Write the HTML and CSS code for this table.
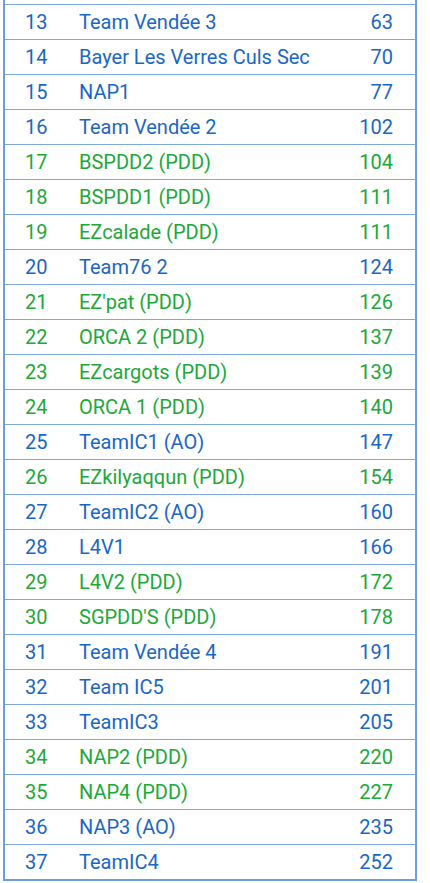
FILE: index.html
```html
<!DOCTYPE html>
<html lang="fr">
<head>
<meta charset="utf-8">
<link rel="stylesheet" href="styles.css">
</head>
<body>
<div class="frame">
  <div class="table">
    <div class="row"><span class="rank">13</span><span class="name">Team Vendée 3</span><span class="score">63</span></div>
    <div class="row"><span class="rank">14</span><span class="name">Bayer Les Verres Culs Sec</span><span class="score">70</span></div>
    <div class="row"><span class="rank">15</span><span class="name">NAP1</span><span class="score">77</span></div>
    <div class="row"><span class="rank">16</span><span class="name">Team Vendée 2</span><span class="score">102</span></div>
    <div class="row pdd"><span class="rank">17</span><span class="name">BSPDD2 (PDD)</span><span class="score">104</span></div>
    <div class="row pdd"><span class="rank">18</span><span class="name">BSPDD1 (PDD)</span><span class="score">111</span></div>
    <div class="row pdd"><span class="rank">19</span><span class="name">EZcalade (PDD)</span><span class="score">111</span></div>
    <div class="row"><span class="rank">20</span><span class="name">Team76 2</span><span class="score">124</span></div>
    <div class="row pdd"><span class="rank">21</span><span class="name">EZ'pat (PDD)</span><span class="score">126</span></div>
    <div class="row pdd"><span class="rank">22</span><span class="name">ORCA 2 (PDD)</span><span class="score">137</span></div>
    <div class="row pdd"><span class="rank">23</span><span class="name">EZcargots (PDD)</span><span class="score">139</span></div>
    <div class="row pdd"><span class="rank">24</span><span class="name">ORCA 1 (PDD)</span><span class="score">140</span></div>
    <div class="row"><span class="rank">25</span><span class="name">TeamIC1 (AO)</span><span class="score">147</span></div>
    <div class="row pdd"><span class="rank">26</span><span class="name">EZkilyaqqun (PDD)</span><span class="score">154</span></div>
    <div class="row"><span class="rank">27</span><span class="name">TeamIC2 (AO)</span><span class="score">160</span></div>
    <div class="row"><span class="rank">28</span><span class="name">L4V1</span><span class="score">166</span></div>
    <div class="row pdd"><span class="rank">29</span><span class="name">L4V2 (PDD)</span><span class="score">172</span></div>
    <div class="row pdd"><span class="rank">30</span><span class="name">SGPDD'S (PDD)</span><span class="score">178</span></div>
    <div class="row"><span class="rank">31</span><span class="name">Team Vendée 4</span><span class="score">191</span></div>
    <div class="row"><span class="rank">32</span><span class="name">Team IC5</span><span class="score">201</span></div>
    <div class="row"><span class="rank">33</span><span class="name">TeamIC3</span><span class="score">205</span></div>
    <div class="row pdd"><span class="rank">34</span><span class="name">NAP2 (PDD)</span><span class="score">220</span></div>
    <div class="row pdd"><span class="rank">35</span><span class="name">NAP4 (PDD)</span><span class="score">227</span></div>
    <div class="row"><span class="rank">36</span><span class="name">NAP3 (AO)</span><span class="score">235</span></div>
    <div class="row"><span class="rank">37</span><span class="name">TeamIC4</span><span class="score">252</span></div>
  </div>
</div>
</body>
</html>
```
FILE: styles.css
```css
html, body {
  margin: 0;
  padding: 0;
  background: #ffffff;
}
body {
  font-family: Roboto, "Liberation Sans", Arial, sans-serif;
  font-size: 20px;
  color: #1a67c3;
}
.frame {
  width: 410px;
  margin-left: 3px;
  padding-top: 4px;
  border-left: 2px solid #6e9fdc;
  border-right: 2px solid #6e9fdc;
  border-bottom: 2px solid #6e9fdc;
  box-sizing: content-box;
}
.table {
  border-top: 1px solid #7ea9e0;
  display: flex;
  flex-direction: column;
}
.row {
  display: flex;
  align-items: center;
  height: 34px;
  border-bottom: 1px solid #7ea9e0;
}
.row:last-child {
  border-bottom: none;
}
.rank {
  width: 74px;
  padding-left: 20px;
  box-sizing: border-box;
}
.name {
  flex: 1;
  white-space: nowrap;
}
.score {
  padding-right: 22px;
  text-align: right;
}
.pdd {
  color: #20a83a;
}
```
